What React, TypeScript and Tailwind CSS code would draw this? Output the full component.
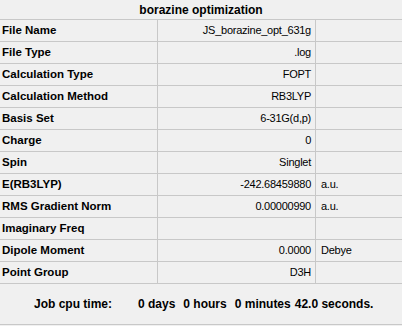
const rows: { label: string; value: string; unit?: string }[] = [
  { label: "File Name", value: "JS_borazine_opt_631g" },
  { label: "File Type", value: ".log" },
  { label: "Calculation Type", value: "FOPT" },
  { label: "Calculation Method", value: "RB3LYP" },
  { label: "Basis Set", value: "6-31G(d,p)" },
  { label: "Charge", value: "0" },
  { label: "Spin", value: "Singlet" },
  { label: "E(RB3LYP)", value: "-242.68459880", unit: "a.u." },
  { label: "RMS Gradient Norm", value: "0.00000990", unit: "a.u." },
  { label: "Imaginary Freq", value: "" },
  { label: "Dipole Moment", value: "0.0000", unit: "Debye" },
  { label: "Point Group", value: "D3H" },
];

export default function App() {
  return (
    <div className="h-[326px] w-[402px] overflow-hidden bg-[#f0f0f0] font-['Liberation_Sans',Arial,sans-serif] text-[12px] text-black">
      <div className="flex h-[20px] items-center justify-center border-b border-[#c8c8c8] font-bold">
        borazine optimization
      </div>
      {rows.map((r) => (
        <div
          key={r.label}
          className="grid h-[22px] grid-cols-[158px_158px_1fr] border-b border-[#c8c8c8]"
        >
          <div className="flex items-center border-r border-[#c8c8c8] pl-[2px] text-[11.5px] font-bold">
            {r.label}
          </div>
          <div className="flex items-center justify-end border-r border-[#c8c8c8] pr-[4px] text-[11px] tracking-[-0.25px]">
            {r.value}
          </div>
          <div className="flex items-center pl-[5px] text-[11px] tracking-[-0.25px]">{r.unit}</div>
        </div>
      ))}
      <div className="flex h-[41px] items-center border-b border-[#c8c8c8] font-bold">
        <span className="ml-[34px] w-[104px]">Job cpu time:</span>
        <span className="mr-[8px]">0 days</span>
        <span className="mr-[8px]">0 hours</span>
        <span className="mr-[4px]">0 minutes</span>
        <span>42.0 seconds.</span>
      </div>
    </div>
  );
}
